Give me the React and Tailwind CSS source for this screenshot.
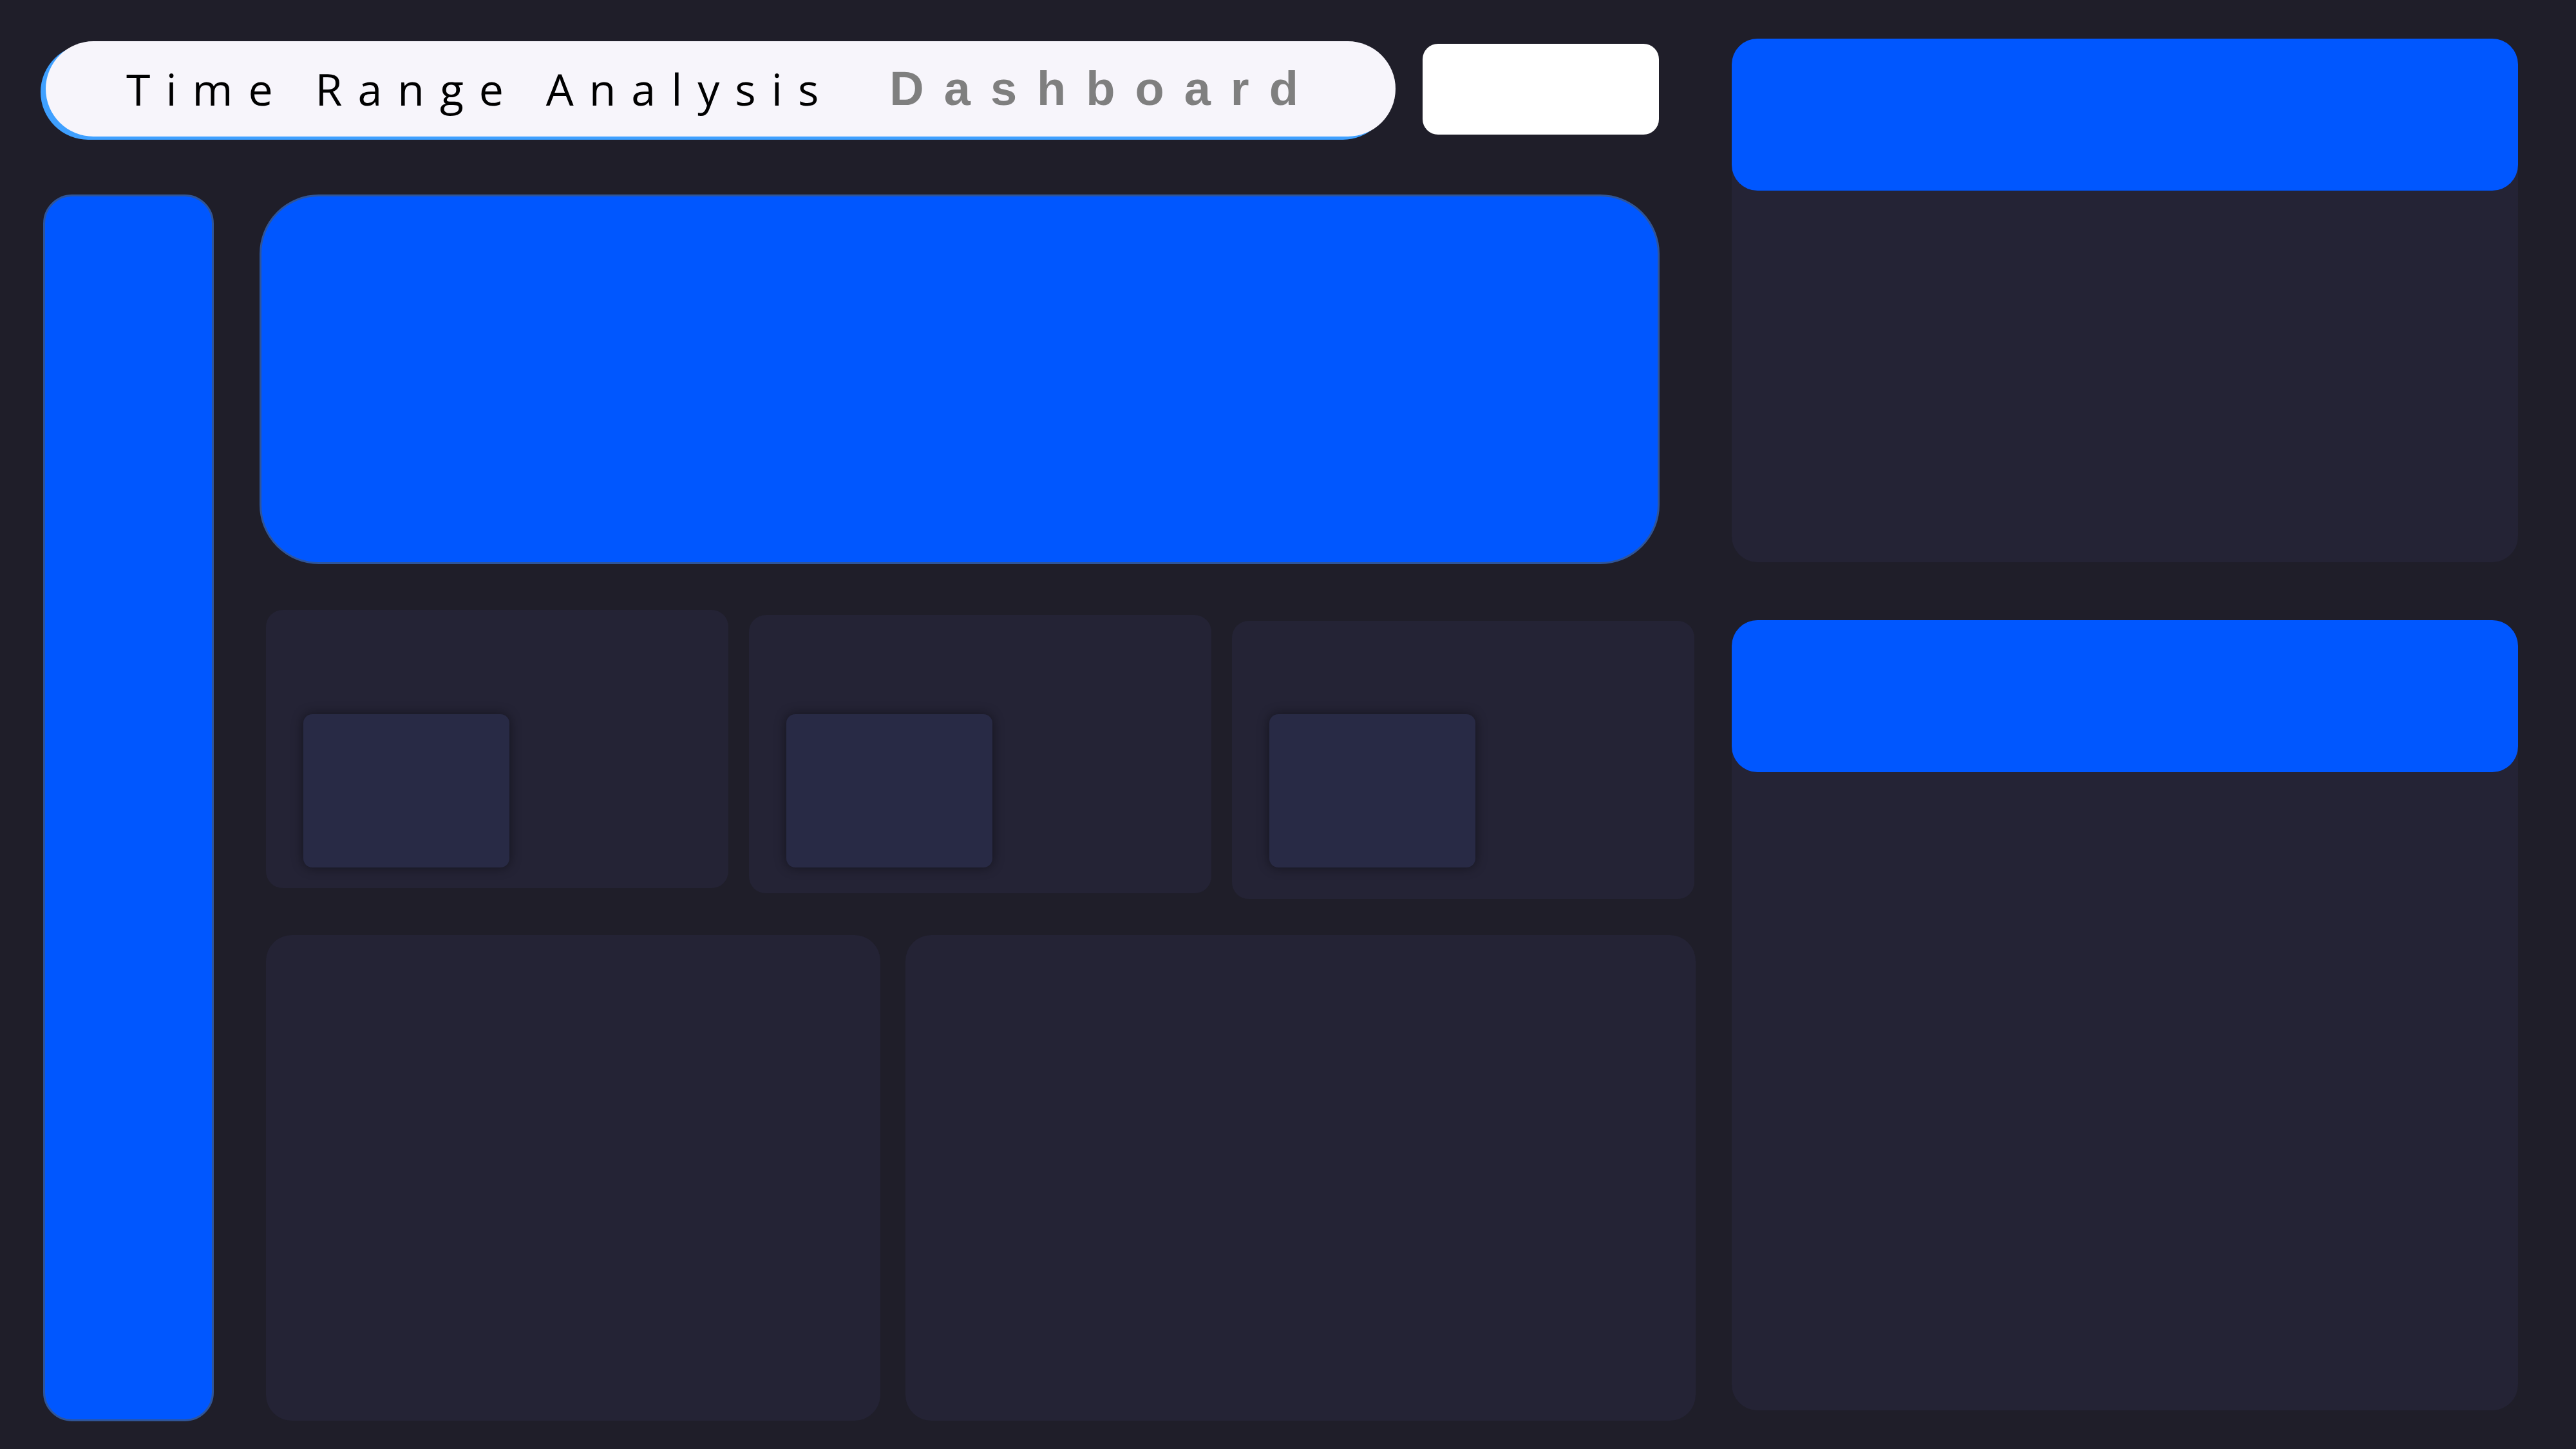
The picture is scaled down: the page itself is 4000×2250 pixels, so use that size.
import React from "react";

function StatCard({ offset, inner }) {
  return (
    <div className={`w-[718px] h-[432px] rounded-[26px] bg-[#242335] ${offset}`}>
      <div className={`ml-[58px] ${inner} w-[320px] h-[238px] rounded-[14px] bg-[#282a45] shadow-[0_0_18px_rgba(0,0,0,0.45)]`} />
    </div>
  );
}

function SidePanel({ height }) {
  return (
    <div className={`w-[1221px] ${height} rounded-[40px] bg-[#242335] flex flex-col`}>
      <div className="h-[236px] rounded-[40px] bg-[#0057ff]" />
    </div>
  );
}

export default function App() {
  return (
    <div className="w-[4000px] h-[2250px] bg-[#1f1e29] flex pl-[67px] pt-[60px] gap-[56px]">
      {/* left area */}
      <div className="w-[2566px] flex flex-col">
        <div className="flex items-center mt-[4px] h-[148px]">
          <div className="ml-[4px] w-[2096px] h-[148px] rounded-full bg-[#f7f5fb] shadow-[-8px_5px_0_#3fa0ff] flex items-center pl-[125px]">
            <span
              className="text-[68px] tracking-[24px] text-black leading-none"
              style={{ fontFamily: '"Open Sans", sans-serif' }}
            >
              Time Range Analysis
            </span>
            <span
              className="ml-[86px] text-[74px] font-bold tracking-[31px] text-[#7f7f7f] leading-none"
              style={{ fontFamily: '"Liberation Sans", Arial, sans-serif' }}
            >
              Dashboard
            </span>
          </div>
          <div className="ml-[42px] w-[367px] h-[141px] rounded-[24px] bg-white" />
        </div>

        <div className="flex mt-[90px] gap-[71px]">
          <div className="w-[265px] h-[1905px] rounded-[45px] bg-[#0057ff] border-[3px] border-[#2f5599]" />

          <div className="flex flex-col">
            <div className="w-[2174px] h-[574px] rounded-[92px] bg-[#0057ff] border-[3px] border-[#2f5599]" />

            <div className="flex items-start gap-[32px] ml-[10px] mt-[71px]">
              <StatCard offset="mt-0" inner="mt-[162px]" />
              <StatCard offset="mt-[8px]" inner="mt-[154px]" />
              <StatCard offset="mt-[17px]" inner="mt-[145px]" />
            </div>

            <div className="flex gap-[39px] ml-[10px] mt-[56px]">
              <div className="w-[954px] h-[754px] rounded-[40px] bg-[#242335]" />
              <div className="w-[1227px] h-[754px] rounded-[40px] bg-[#242335]" />
            </div>
          </div>
        </div>
      </div>

      {/* right column */}
      <div className="flex flex-col gap-[90px]">
        <SidePanel height="h-[813px]" />
        <SidePanel height="h-[1227px]" />
      </div>
    </div>
  );
}
